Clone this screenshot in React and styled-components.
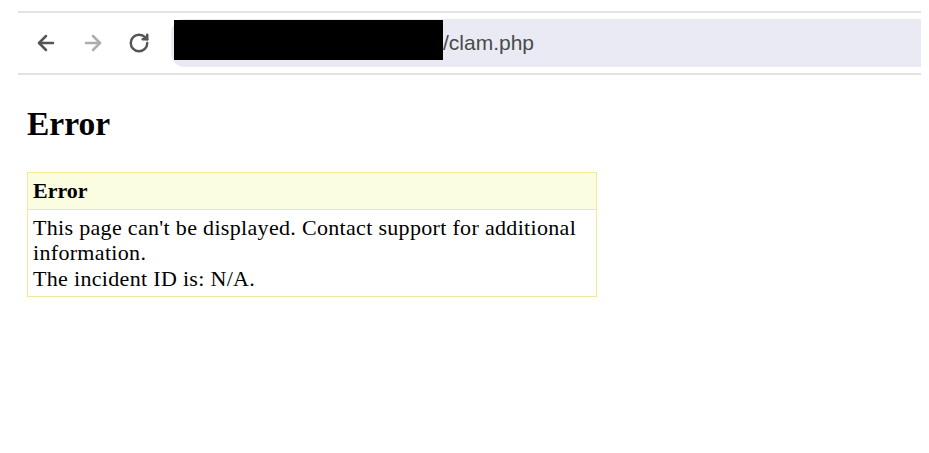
import React from "react";
import styled, { createGlobalStyle } from "styled-components";
import { ArrowLeft, ArrowRight, RotateCw } from "lucide-react";

const GlobalStyle = createGlobalStyle`
  html, body {
    margin: 0;
    padding: 0;
    background: #ffffff;
  }
  body {
    font-family: "Liberation Serif", "Times New Roman", serif;
    color: #000;
  }
`;

const Page = styled.div`
  width: 929px;
  height: 453px;
  overflow: hidden;
  padding-top: 11px;
  box-sizing: border-box;
`;

const Toolbar = styled.div`
  margin: 0 8px 0 18px;
  height: 54px;
  border-top: 2px solid #e3e3e3;
  border-bottom: 2px solid #e3e3e3;
  display: flex;
  align-items: flex-start;
  padding-top: 6px;
  box-sizing: content-box;
`;

const NavGroup = styled.div`
  display: flex;
  align-items: center;
  gap: 23px;
  padding-left: 16px;
  height: 48px;
`;

const NavButton = styled.span`
  display: flex;
  color: ${(p) => (p.$disabled ? "#adadad" : "#555555")};
`;

const UrlBar = styled.div`
  flex: 1;
  margin-left: 21px;
  height: 48px;
  background: #e9eaf4;
  border-radius: 14px 0 0 14px;
  display: flex;
  align-items: flex-start;
`;

const Redacted = styled.div`
  width: 269px;
  height: 40px;
  margin: 1px 0 0 3px;
  background: #000;
`;

const UrlText = styled.span`
  font-family: "Liberation Sans", Arial, sans-serif;
  font-size: 21px;
  color: #4a4a4a;
  line-height: 48px;
`;

const Content = styled.div`
  padding-left: 27px;
`;

const Heading = styled.h2`
  margin: 30px 0 29px;
  font-size: 33.5px;
  line-height: 38px;
  font-weight: bold;
`;

const Notice = styled.div`
  width: 570px;
  box-sizing: border-box;
  border: 1px solid #f4e797;
  font-size: 22px;
  line-height: 25.5px;
`;

const NoticeHeader = styled.div`
  background: #fbfde0;
  border-bottom: 1px solid #f4e797;
  padding: 5px;
  font-weight: bold;
`;

const NoticeBody = styled.div`
  padding: 5px;
  letter-spacing: 0.32px;
`;

export default function App() {
  return (
    <>
      <GlobalStyle />
      <Page>
        <Toolbar>
          <NavGroup>
            <NavButton>
              <ArrowLeft size={24} strokeWidth={2.5} />
            </NavButton>
            <NavButton $disabled>
              <ArrowRight size={24} strokeWidth={2.5} />
            </NavButton>
            <NavButton>
              <RotateCw size={22} strokeWidth={2.7} />
            </NavButton>
          </NavGroup>
          <UrlBar>
            <Redacted />
            <UrlText>/clam.php</UrlText>
          </UrlBar>
        </Toolbar>
        <Content>
          <Heading>Error</Heading>
          <Notice>
            <NoticeHeader>Error</NoticeHeader>
            <NoticeBody>
              This page can't be displayed. Contact support for additional
              information.
              <br />
              The incident ID is: N/A.
            </NoticeBody>
          </Notice>
        </Content>
      </Page>
    </>
  );
}
